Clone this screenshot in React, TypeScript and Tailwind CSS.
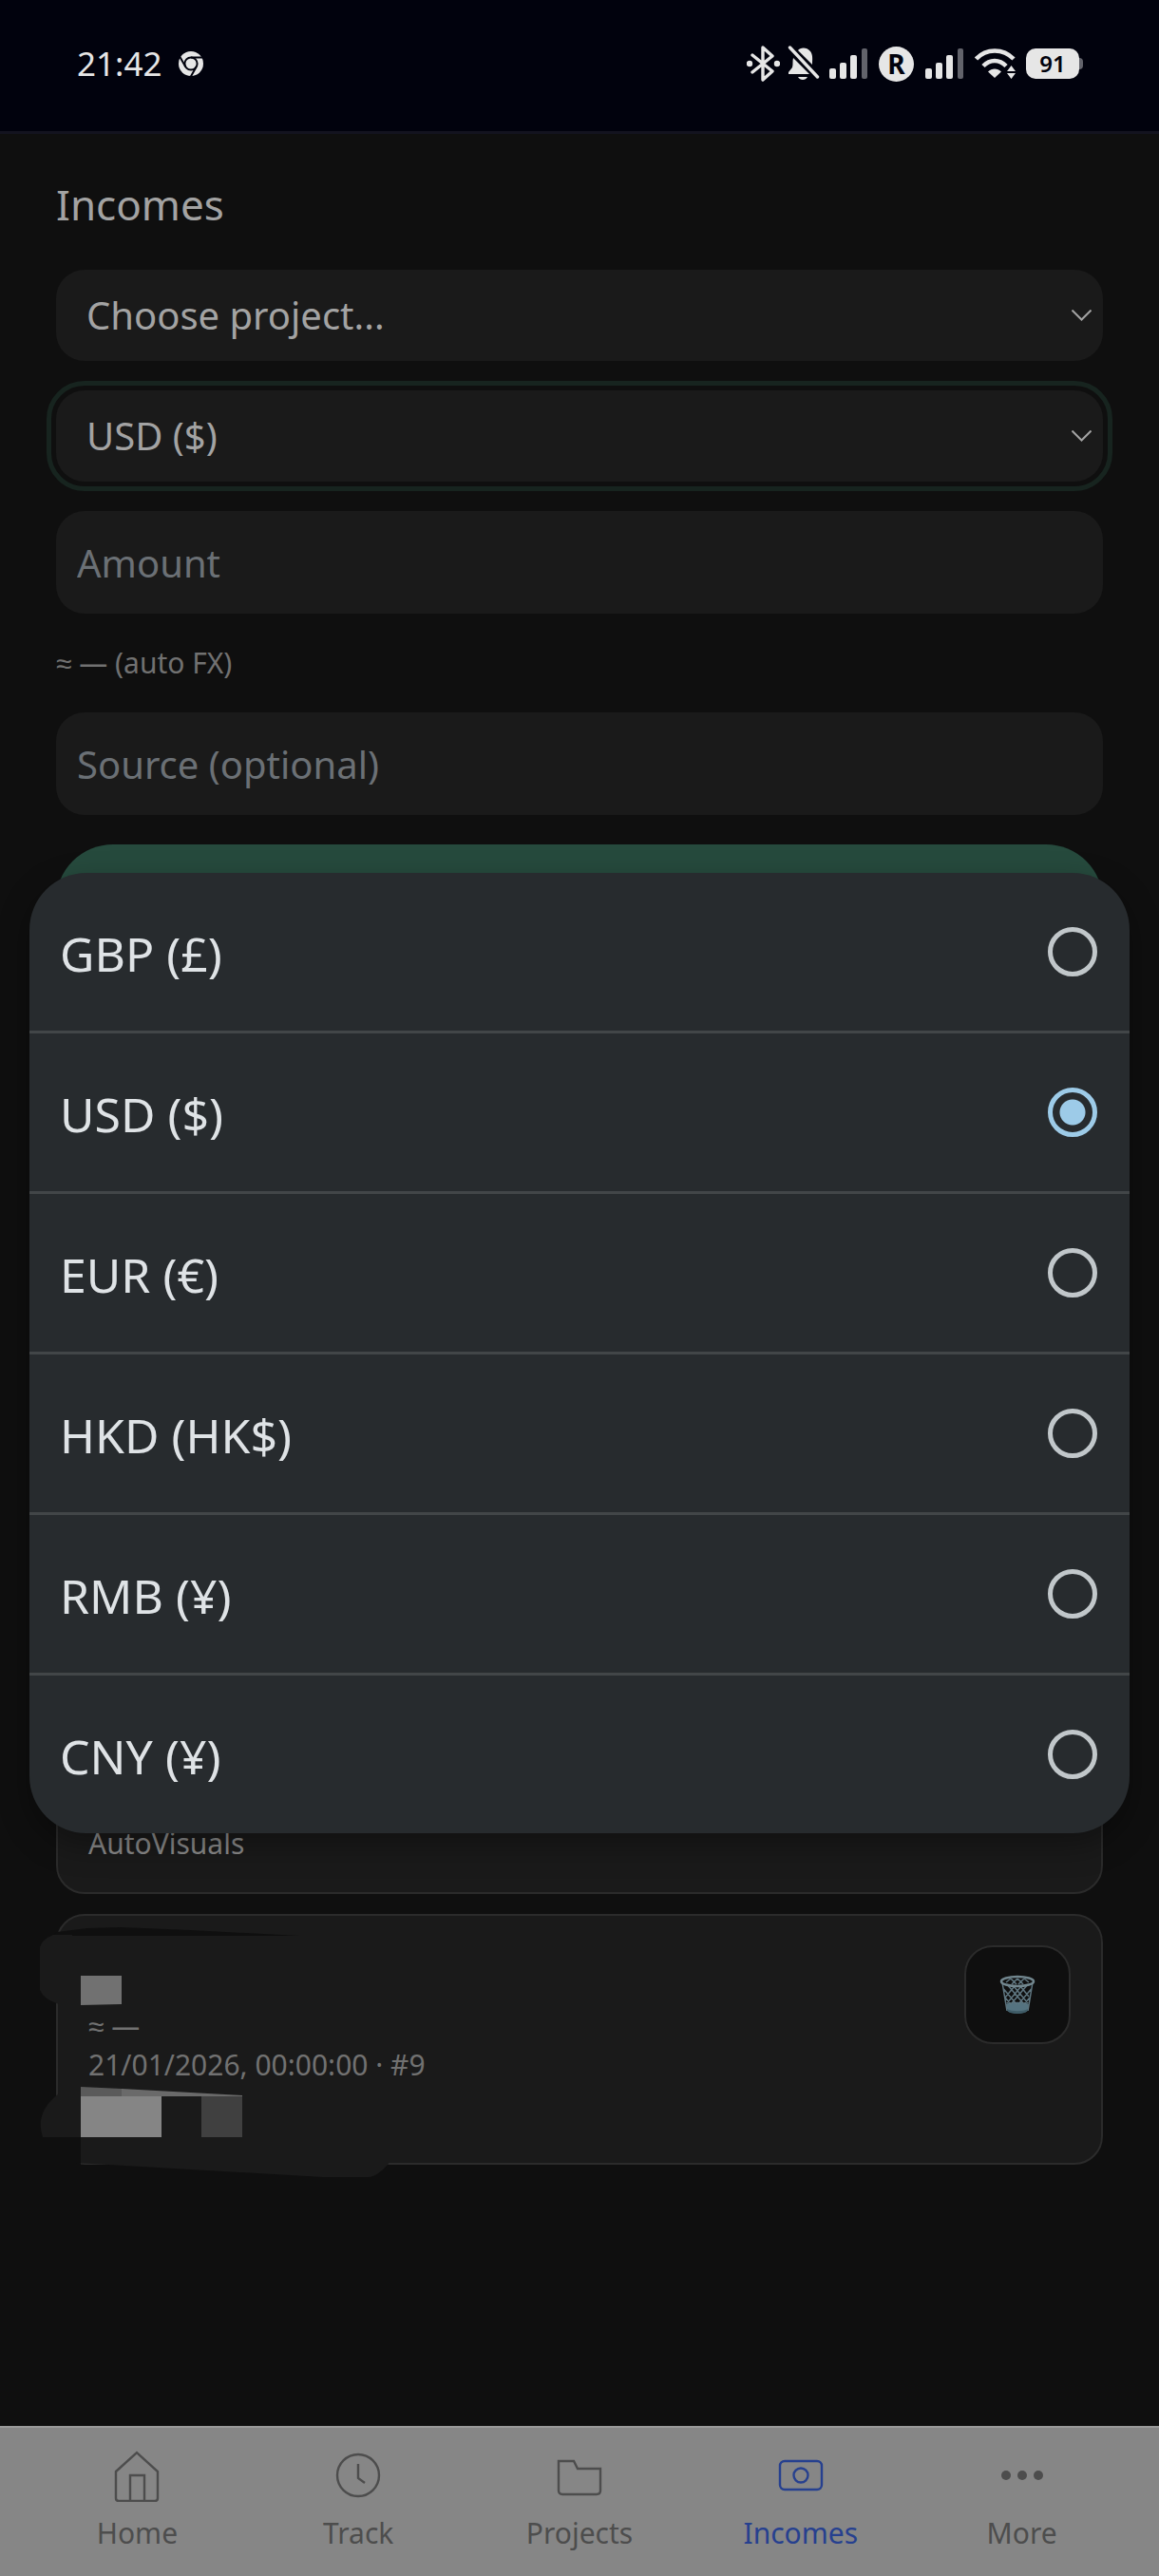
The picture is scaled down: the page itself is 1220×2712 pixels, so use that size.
import { useState } from 'react';
import type { ReactNode } from 'react';
import clsx from 'clsx';

interface Income {
  id: number;
  project?: string;
  converted?: string;
  date?: string;
  redacted?: boolean;
}

const currencies = [
  { code: 'GBP', label: 'GBP (£)' },
  { code: 'USD', label: 'USD ($)' },
  { code: 'EUR', label: 'EUR (€)' },
  { code: 'HKD', label: 'HKD (HK$)' },
  { code: 'RMB', label: 'RMB (¥)' },
  { code: 'CNY', label: 'CNY (¥)' },
];

const incomes: Income[] = [
  { id: 10, project: 'AutoVisuals' },
  { id: 9, converted: '≈ —', date: '21/01/2026, 00:00:00', redacted: true },
];

function SignalIcon() {
  return (
    <svg width="40" height="32" viewBox="0 0 40 32" fill="#e6e6e6">
      <rect x="0" y="21" width="7" height="11" rx="2" />
      <rect x="11" y="15" width="7" height="17" rx="2" />
      <rect x="22" y="7" width="7" height="25" rx="2" />
      <rect x="34" y="0" width="6" height="32" rx="2" fill="#62636b" />
    </svg>
  );
}

function StatusBar() {
  return (
    <header className="flex h-[141px] items-center border-b-[3px] border-[#13131f] bg-[#01020d] pr-20 pb-1 pl-[81px] text-[#e6e6e6]">
      <span className="text-[35px] leading-10">21:42</span>
      <svg className="ml-[18px]" width="26" height="26" viewBox="0 0 26 26">
        <circle cx="13" cy="13" r="13" fill="#e6e6e6" />
        <circle cx="13" cy="13" r="6.6" fill="#e6e6e6" stroke="#01020d" strokeWidth="2" />
        <path d="M13 6.4h13M7.3 16.3L1 5.2M18.7 16.3L12.6 27" stroke="#01020d" strokeWidth="2" />
      </svg>
      <div className="ml-auto flex items-center">
        <svg width="35" height="38" viewBox="0 0 35 38" fill="none" stroke="#e6e6e6" strokeWidth="3.4" strokeLinejoin="round" strokeLinecap="round">
          <path d="M6 10l21 17-10 9V2l10 9L6 28" />
          <circle cx="3" cy="19" r="1.5" fill="#e6e6e6" />
          <circle cx="32" cy="19" r="1.5" fill="#e6e6e6" />
        </svg>
        <svg className="ml-2" width="34" height="38" viewBox="0 0 34 38" fill="#e6e6e6">
          <path d="M11 5C13 2 20 1 24 6c3 4 2 9 2 14L11 5zM6 13l17 17H1v-2l4-5c1-3 0-7 1-10zM11 33h10c-2 4-8 4-10 0z" />
          <path d="M2.5 2l29 31" stroke="#e6e6e6" strokeWidth="3.4" strokeLinecap="round" />
        </svg>
        <div className="ml-2.5"><SignalIcon /></div>
        <span className="ml-3 flex size-[37px] items-center justify-center rounded-full bg-[#e6e6e6] text-[28px] leading-none font-bold text-[#01020d]">
          R
        </span>
        <div className="ml-3"><SignalIcon /></div>
        <svg className="ml-3" width="44" height="32" viewBox="0 0 44 32" fill="none" stroke="#e6e6e6" strokeWidth="4.5">
          <path d="M1.5 11C12-.5 30-.5 41 11M9 18.5C16 11 26 11 33 18.5" />
          <path d="M14 24.5C18 20.5 24 20.5 28 24.5L21 31z" fill="#e6e6e6" stroke="none" />
          <path d="M34 24l4.5-6 4.5 6zM34 26l4.5 6 4.5-6z" fill="#e6e6e6" stroke="none" />
        </svg>
        <span className="ml-2.5 flex h-8 w-14 items-center justify-center rounded-[10px] bg-[#e6e6e6] text-[24px] leading-none font-semibold text-[#01020d]">
          91
        </span>
        <span className="h-3 w-1 rounded-r-sm bg-[#62636b]" />
      </div>
    </header>
  );
}

function Select({ id, label, focused, children, value, onChange }: {
  id: string;
  label: string;
  focused?: boolean;
  children: ReactNode;
  value?: string;
  onChange?: (value: string) => void;
}) {
  return (
    <div className="relative">
      <select
        id={id}
        aria-label={label}
        value={value}
        onChange={(e) => onChange?.(e.target.value)}
        className={clsx(
          'block h-24 w-full appearance-none rounded-[30px] bg-[#1a1a1a] px-8 text-[40px] leading-[56px] text-[#a3a3a3]',
          focused ? 'outline-[5px] outline-offset-[5px] outline-[#17241f]' : 'outline-none',
        )}
      >
        {children}
      </select>
      <svg
        className="pointer-events-none absolute top-1/2 right-3 -translate-y-1/2"
        width="21"
        height="12"
        viewBox="0 0 21 12"
        fill="none"
        stroke="#a3a3a3"
        strokeWidth="2"
      >
        <path d="M.5 .5l10 10 10-10" />
      </svg>
    </div>
  );
}

function TrashIcon() {
  return (
    <svg width="38" height="42" viewBox="0 0 38 42" fill="none" stroke="#5f7680" strokeWidth="1.5">
      <path d="M7 31l1.5 7c3 3.500 18 3.500 21 0L31 31c-5-3-19-3-24 0z" fill="#557380" stroke="none" />
      <path d="M3 8l5 30M35 8l-5 30M8 10l17 20M15 12l15 18M22 12l9 11M4.5 15L18 31M6 24l6 7M30 10L13 30M23 12L8 30M16 12L6 24M33.5 15L20 31M32 24l-6 7M12 4l6 6M19 4l6 6M26 4l5 4M26 4l-6 6M19 4l-6 6M12 4L7 8" />
      <ellipse cx="19" cy="7" rx="17" ry="5" stroke="#72878f" strokeWidth="2.5" />
      <path d="M8 36c5 3 17 3 22 0l-.5 2c-3 4-18 4-21 0z" fill="#3f5c67" stroke="none" />
    </svg>
  );
}

// marker strokes and mosaic blocks that hide the amount and the project
function Redaction() {
  return (
    <svg className="pointer-events-none absolute top-3 -left-[19px]" width="370" height="266" viewBox="0 0 370 266">
      <path d="M18 5L50 1l35-1 73 3 115 6H13z" fill="#0f0f0f" />
      <path d="M14 8h20v73H20Q4 76 0 66V21Q2 13 14 8z" fill="#1a1a1a" />
      <path d="M43 51h43v30l-43 1z" fill="#717171" />
      <path d="M20 175h23v46H3Q-6 195 20 175z" fill="#1a1a1a" />
      <path d="M15 221h28v31H15z" fill="#0f0f0f" />
      <path d="M43 221h324v28q-12 14-22 14h-47L38 248h5z" fill="#1a1a1a" />
      <path d="M43 168l43 2v8H43z" fill="#5a5a5a" />
      <path d="M86 170l127 7v1H86z" fill="#6a6a6a" />
      <path d="M43 178h85v43H43z" fill="#858585" />
      <path d="M170 178h43v43h-43z" fill="#404040" />
    </svg>
  );
}

function IncomeCard({ data }: { data: Income }) {
  return (
    <li className="relative flex h-[264px] items-start justify-between rounded-[30px] border-2 border-[#2b2b2b] bg-[#1a1a1a] px-8 py-[31px] text-[30px] leading-[41px] text-[#717171]">
      <div className="flex flex-col self-stretch">
        {data.date && (
          <div className="pt-16">
            <p>{data.converted}</p>
            <p>{data.date} · #{data.id}</p>
          </div>
        )}
        {data.project && <p className="mt-auto text-[#8a8a8a]">{data.project}</p>}
      </div>
      {data.redacted && <Redaction />}
      <button
        aria-label={`Delete income ${data.id}`}
        className="flex h-[104px] w-28 items-center justify-center rounded-[30px] border-2 border-[#2b2b2b] bg-[#0f0f0f]"
      >
        <TrashIcon />
      </button>
    </li>
  );
}

const tabs = [
  {
    name: 'Home',
    icon: <path d="M6 24L28 4l22 20v28q0 3-3 3H9q-3 0-3-3zM21 55V28h15v27" />,
  },
  {
    name: 'Track',
    icon: (
      <>
        <circle cx="28" cy="28" r="22" />
        <path d="M28 16v15l7 5" />
      </>
    ),
  },
  {
    name: 'Projects',
    icon: <path d="M6 13h16l4 8h24v23q0 4-4 4H10q-4 0-4-4z" />,
  },
  {
    name: 'Incomes',
    icon: (
      <>
        <rect x="6" y="13" width="44" height="30" rx="5" />
        <circle cx="28" cy="28" r="7.5" />
      </>
    ),
  },
  {
    name: 'More',
    icon: (
      <g fill="currentColor" stroke="none">
        <circle cx="11" cy="28" r="5" />
        <circle cx="28" cy="28" r="5" />
        <circle cx="45" cy="28" r="5" />
      </g>
    ),
  },
];

function TabBar() {
  return (
    <nav className="grid grid-cols-5 border-t-2 border-[#9a9a9a] bg-[#868686] px-7 pt-[22px] pb-6">
      {tabs.map((tab) => (
        <a
          key={tab.name}
          href="#"
          className={clsx(
            'flex flex-col items-center gap-3 text-[30px] leading-[42px]',
            tab.name === 'Incomes' ? 'text-[#26408f]' : 'text-[#4d4d4d]',
          )}
        >
          <svg width="56" height="56" viewBox="0 0 56 56" fill="none" stroke="currentColor" strokeWidth="2.4">
            {tab.icon}
          </svg>
          {tab.name}
        </a>
      ))}
    </nav>
  );
}

function CurrencyDialog({ value, onChange }: { value: string; onChange: (code: string) => void }) {
  return (
    <div className="absolute inset-0 flex items-center px-[31px] pt-[137px]">
      <div
        role="radiogroup"
        aria-label="Currency"
        className="w-full divide-y-3 divide-[#424648] rounded-[60px] bg-[#272b2e] shadow-[0_12px_32px_rgba(0,0,0,0.35)]"
      >
        {currencies.map((c) => (
          <label key={c.code} className="box-content flex h-[166px] items-center justify-between px-8 text-[50px] text-[#dfe3e6]">
            <span className="pt-1">{c.label}</span>
            <input
              type="radio"
              name="currency"
              checked={value === c.code}
              onChange={() => onChange(c.code)}
              className="mr-0.5 size-[52px] appearance-none rounded-full border-[5px] border-[#c1c7ca] checked:border-[#9dcbe8] checked:bg-[radial-gradient(circle,#9dcbe8_13px,transparent_14px)]"
            />
          </label>
        ))}
      </div>
    </div>
  );
}

export default function App() {
  const [currency, setCurrency] = useState('USD');

  return (
    <div className="relative flex min-h-screen flex-col bg-[#0f0f0f] font-['Noto_Sans',sans-serif]">
      <StatusBar />
      <main className="flex flex-1 flex-col px-[59px] pt-9">
        <form className="flex flex-col gap-[31px]" onSubmit={(e) => e.preventDefault()}>
          <h1 className="text-[44px] leading-[76px] text-[#a3a3a3]">Incomes</h1>
          <Select id="project" label="Project">
            <option>Choose project...</option>
          </Select>
          <Select id="currency" label="Currency" focused value={currency} onChange={setCurrency}>
            {currencies.map((c) => (
              <option key={c.code} value={c.code}>{c.label}</option>
            ))}
          </Select>
          <input
            aria-label="Amount"
            placeholder="Amount"
            className="h-[108px] w-full rounded-[30px] bg-[#1a1a1a] px-[22px] text-[40px] text-[#a3a3a3] placeholder:text-[#6b7075]"
          />
          <p className="text-[30px] leading-[42px] text-[#717171]">≈ — (auto FX)</p>
          <input
            aria-label="Source"
            placeholder="Source (optional)"
            className="h-[108px] w-full rounded-[30px] bg-[#1a1a1a] px-[22px] text-[40px] text-[#a3a3a3] placeholder:text-[#6b7075]"
          />
          <button aria-label="Add income" className="h-[120px] w-full rounded-[60px] bg-[#264a3d]" />
        </form>
        <ul className="mt-auto flex flex-col gap-[21px] pb-[275px]">
          {incomes.map((income) => (
            <IncomeCard key={income.id} data={income} />
          ))}
        </ul>
      </main>
      <TabBar />
      <CurrencyDialog value={currency} onChange={setCurrency} />
    </div>
  );
}
